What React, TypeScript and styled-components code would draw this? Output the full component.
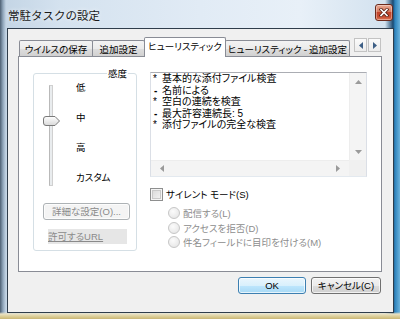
import React from "react";
import styled, { createGlobalStyle } from "styled-components";

const Global = createGlobalStyle`
  html, body { margin: 0; padding: 0; background: #fff; }
  body { width: 400px; height: 319px; overflow: hidden; }
  *, *::before, *::after { box-sizing: border-box; }
`;

const UI_FONT = `"Liberation Sans", "Noto Sans CJK JP", sans-serif`;

const Window = styled.div`
  width: 400px;
  height: 319px;
  display: flex;
  flex-direction: column;
  padding: 0 6px 6px 7px;
  font-family: ${UI_FONT};
  font-feature-settings: "palt";
  background:
    linear-gradient(to bottom, rgba(255,255,255,0) 0px, rgba(255,255,255,0) 312px, #e9e2c4 314px, #d8c98e 317px, #c8b676 319px),
    linear-gradient(to right, #4d6073 0px, #90a6bb 3px, #c4d5e5 6px, #d4e2ef 60px, #e1ebf5 200px, #e8f0f8 300px, #d3e2ef 385px, #1b4a72 393px, #2f84bd 395px, #6cb3dc 400px);
`;

const TitleBar = styled.div`
  height: 28px;
  display: flex;
  align-items: center;
  justify-content: space-between;
  padding: 0 1px 0 1px;
`;

const Title = styled.div`
  font-family: "Noto Sans CJK JP", sans-serif;
  font-feature-settings: normal;
  font-size: 11.5px;
  color: #1a1a1a;
  line-height: 14px;
  margin-top: 1px;
  text-shadow: 0 0 4px rgba(255,255,255,0.9);
`;

const CloseButton = styled.div`
  width: 18px;
  height: 17px;
  margin-top: -4px;
  border: 1px solid #6b2a1c;
  border-radius: 3px;
  display: flex;
  align-items: center;
  justify-content: center;
  background: linear-gradient(to bottom, #e8a993 0%, #d77a5f 45%, #c2432a 50%, #c84f33 80%, #e07b5a 100%);
  box-shadow: inset 0 0 0 1px rgba(255,255,255,0.35);
`;

const Client = styled.div`
  flex: 1;
  display: flex;
  flex-direction: column;
  background: #f0f0f0;
  border: 1px solid #2f3d4b;
  padding: 8px 11px 0 10px;
`;

const TabStrip = styled.div`
  height: 20px;
  display: flex;
  align-items: flex-end;
  padding-left: 2px;
  margin-bottom: -1px;
  position: relative;
  z-index: 1;
`;

const Tab = styled.div<{ $w: number; $active?: boolean }>`
  width: ${(p) => p.$w}px;
  height: ${(p) => (p.$active ? 20 : 16)}px;
  margin-bottom: ${(p) => (p.$active ? 0 : 1)}px;
  margin-left: -1px;
  border: 1px solid #898c95;
  border-bottom: none;
  border-radius: 2px 2px 0 0;
  position: relative;
  z-index: ${(p) => (p.$active ? 2 : 1)};
  display: flex;
  align-items: ${(p) => (p.$active ? "flex-start" : "center")};
  justify-content: center;
  padding-top: ${(p) => (p.$active ? 2 : 0)}px;
  font-family: "Noto Sans CJK JP", sans-serif;
  font-size: 9.5px;
  line-height: 12px;
  color: #000;
  white-space: nowrap;
  background: ${(p) =>
    p.$active
      ? "#ffffff"
      : "linear-gradient(to bottom, #f3f3f3 0%, #ebebeb 50%, #dedede 51%, #d1d1d1 100%)"};
`;

const ArrowPair = styled.div`
  display: flex;
  align-self: flex-start;
  margin: 1px 0 0 3px;
`;

const ArrowButton = styled.div`
  width: 13px;
  height: 14px;
  margin-left: 1px;
  border: 1px solid #c3c3c3;
  background: linear-gradient(to bottom, #fbfbfb, #ececec);
  display: flex;
  align-items: center;
  justify-content: center;
`;

const Panel = styled.div`
  height: 216px;
  background: #fff;
  border: 1px solid #898c95;
  display: grid;
  grid-template-columns: 104px 217px;
  column-gap: 13px;
  align-items: start;
  padding: 15px 0 0 14px;
`;

const GroupBox = styled.div`
  height: 178px;
  margin-top: 1px;
  border: 1px solid #d5dfe5;
  border-radius: 3px;
  position: relative;
  padding: 11px 0 0 9px;
  display: flex;
  flex-direction: column;
  align-items: flex-start;
`;

const GroupLabel = styled.span`
  position: absolute;
  top: -7px;
  right: 8px;
  padding: 0 1px;
  background: #fff;
  font-family: "Noto Sans CJK JP", sans-serif;
  font-size: 9.5px;
  line-height: 12px;
  color: #000;
`;

const SliderRow = styled.div`
  display: flex;
  height: 101px;
`;

const TrackColumn = styled.div`
  width: 17px;
  position: relative;
  display: flex;
  justify-content: center;
`;

const Track = styled.div`
  width: 4px;
  height: 100%;
  margin-left: -1px;
  border: 1px solid #d0d0d0;
  border-left-color: #b9b9b9;
  background: #e9ecee;
`;

const Thumb = styled.svg`
  position: absolute;
  left: 0;
  top: 31px;
`;

const LevelList = styled.div`
  display: flex;
  flex-direction: column;
  gap: 18px;
  margin: -4px 0 0 16px;
`;

const Level = styled.div`
  font-family: "Noto Sans CJK JP", sans-serif;
  font-size: 9.5px;
  line-height: 12px;
  color: #000;
`;

const PushButton = styled.div<{ $w: number; $default?: boolean; $disabled?: boolean }>`
  width: ${(p) => p.$w}px;
  height: 17px;
  border: 1px solid ${(p) => (p.$default ? "#3c7fb1" : p.$disabled ? "#adb2b5" : "#707070")};
  border-radius: 3px;
  display: flex;
  align-items: center;
  justify-content: center;
  font-family: ${UI_FONT};
  font-size: 9.5px;
  line-height: 12px;
  color: ${(p) => (p.$disabled ? "#8a8a8a" : "#000")};
  white-space: nowrap;
  background: ${(p) =>
    p.$default
      ? "linear-gradient(to bottom, #eaf6fd 0%, #d9f0fc 50%, #bee6fd 51%, #a7d9f5 100%)"
      : p.$disabled
      ? "#f4f4f4"
      : "linear-gradient(to bottom, #f2f2f2 0%, #ebebeb 50%, #dddddd 51%, #cfcfcf 100%)"};
  box-shadow: inset 0 0 0 1px rgba(255,255,255,0.7);
`;

const DetailSpacer = styled.div`
  margin-top: 17px;
`;

const UrlLink = styled.div`
  margin: 9px 0 0 5px;
  width: 79px;
  height: 15px;
  background: #e6e6e6;
  font-family: ${UI_FONT};
  font-size: 9.5px;
  line-height: 15px;
  color: #8a8a8a;
  text-decoration: underline;
`;

const RightColumn = styled.div`
  display: flex;
  flex-direction: column;
`;

const ListBox = styled.div`
  width: 217px;
  height: 105px;
  border: 1px solid #abadb3;
  border-left-color: #dbdfe6;
  border-right-color: #dbdfe6;
  border-bottom-color: #e3e9ef;
  display: grid;
  grid-template-columns: 1fr 17px;
  grid-template-rows: 1fr 16px;
`;

const ListText = styled.div`
  padding: 0 0 0 1px;
  font-family: ${UI_FONT};
  font-size: 10px;
  line-height: 11.5px;
  color: #000;
`;

const Line = styled.div`
  display: flex;
  white-space: nowrap;
`;

const Mark = styled.span<{ $dash?: boolean }>`
  width: 10px;
  flex: none;
  padding-left: ${(p) => (p.$dash ? 2 : 1)}px;
  font-weight: ${(p) => (p.$dash ? 700 : 400)};
`;

const VScroll = styled.div`
  background: #f4f4f4;
  border-left: 1px solid #ededed;
  display: flex;
  flex-direction: column;
  justify-content: space-between;
  align-items: center;
  padding: 7px 0 6px;
`;

const HScroll = styled.div`
  background: #f4f4f4;
  border-top: 1px solid #ededed;
  display: flex;
  justify-content: space-between;
  align-items: center;
  padding: 0 9px 0 9px;
`;

const Corner = styled.div`
  background: #f0f0f0;
`;

const CheckRow = styled.label`
  display: flex;
  align-items: center;
  margin-top: 10px;
  height: 14px;
  font-family: ${UI_FONT};
  font-size: 9.5px;
  color: #000;
  white-space: nowrap;
`;

const CheckBox = styled.span`
  width: 13px;
  height: 13px;
  margin-right: 3px;
  border: 1px solid #8e8f8f;
  background: linear-gradient(135deg, #d6d6d6, #f6f6f6);
  box-shadow: inset 0 0 0 1px #f4f4f4, inset 0 0 0 2px #c9c9c9;
`;

const RadioList = styled.div`
  display: flex;
  flex-direction: column;
  gap: 2px;
  margin: 6px 0 0 18px;
`;

const RadioRow = styled.div`
  display: flex;
  align-items: center;
  height: 12.5px;
  font-family: ${UI_FONT};
  font-size: 9.5px;
  color: #8d8d8d;
  white-space: nowrap;
`;

const RadioDot = styled.span`
  width: 12px;
  height: 12px;
  margin-right: 3px;
  border-radius: 50%;
  border: 1px solid #c6c6c6;
  background: radial-gradient(circle at 40% 35%, #fbfbfb, #e2e2e2);
`;

const ButtonRow = styled.div`
  display: flex;
  justify-content: flex-end;
  gap: 5px;
  margin: 5px 1px 0 0;
`;

const Tri = ({ dir, color = "#9a9a9a" }: { dir: "up" | "down" | "left" | "right"; color?: string }) => {
  const pts = {
    up: "0,4 3.5,0 7,4",
    down: "0,0 3.5,4 7,0",
    left: "4,0 0,3.5 4,7",
    right: "0,0 4,3.5 0,7",
  }[dir];
  const vert = dir === "up" || dir === "down";
  return (
    <svg width={vert ? 7 : 4} height={vert ? 4 : 7} viewBox={vert ? "0 0 7 4" : "0 0 4 7"}>
      <polygon points={pts} fill={color} />
    </svg>
  );
};

export default function App() {
  return (
    <>
      <Global />
      <Window>
        <TitleBar>
          <Title>常駐タスクの設定</Title>
          <CloseButton>
            <svg width="10" height="9" viewBox="0 0 10 9">
              <path d="M2 1.5 L8 7.5 M8 1.5 L2 7.5" stroke="#5a2216" strokeWidth="3.2" strokeLinecap="square" />
              <path d="M2 1.5 L8 7.5 M8 1.5 L2 7.5" stroke="#ffffff" strokeWidth="1.6" strokeLinecap="square" />
            </svg>
          </CloseButton>
        </TitleBar>
        <Client>
          <TabStrip>
            <Tab $w={74}>ウイルスの保存</Tab>
            <Tab $w={53}>追加設定</Tab>
            <Tab $w={82} $active>ヒューリスティック</Tab>
            <Tab $w={125}>ヒューリスティック - 追加設定</Tab>
            <ArrowPair>
              <ArrowButton>
                <Tri dir="left" color="#3d5f86" />
              </ArrowButton>
              <ArrowButton>
                <Tri dir="right" color="#3d5f86" />
              </ArrowButton>
            </ArrowPair>
          </TabStrip>
          <Panel>
            <GroupBox>
              <GroupLabel>感度</GroupLabel>
              <SliderRow>
                <TrackColumn>
                  <Track />
                  <Thumb width="18" height="10" viewBox="0 0 18 10">
                    <defs>
                      <linearGradient id="thumbG" x1="0" y1="0" x2="0" y2="1">
                        <stop offset="0" stopColor="#ffffff" />
                        <stop offset="1" stopColor="#d9d9d9" />
                      </linearGradient>
                    </defs>
                    <path
                      d="M3 0.5 H12 L16.5 5 L12 9.5 H3 Q0.5 9.5 0.5 7 V3 Q0.5 0.5 3 0.5 Z"
                      fill="url(#thumbG)"
                      stroke="#7a7a7a"
                    />
                  </Thumb>
                </TrackColumn>
                <LevelList>
                  <Level>低</Level>
                  <Level>中</Level>
                  <Level>高</Level>
                  <Level>カスタム</Level>
                </LevelList>
              </SliderRow>
              <DetailSpacer>
                <PushButton $w={87} $disabled>
                  詳細な設定(O)...
                </PushButton>
              </DetailSpacer>
              <UrlLink>許可するURL</UrlLink>
            </GroupBox>
            <RightColumn>
              <ListBox>
                <ListText>
                  <Line><Mark>*</Mark>基本的な添付ファイル検査</Line>
                  <Line><Mark $dash>-</Mark>名前による</Line>
                  <Line><Mark>*</Mark>空白の連続を検査</Line>
                  <Line><Mark $dash>-</Mark>最大許容連続長: 5</Line>
                  <Line><Mark>*</Mark>添付ファイルの完全な検査</Line>
                </ListText>
                <VScroll>
                  <Tri dir="up" />
                  <Tri dir="down" />
                </VScroll>
                <HScroll>
                  <Tri dir="left" />
                  <Tri dir="right" />
                </HScroll>
                <Corner />
              </ListBox>
              <CheckRow>
                <CheckBox />
                サイレント モード(S)
              </CheckRow>
              <RadioList>
                <RadioRow><RadioDot />配信する(L)</RadioRow>
                <RadioRow><RadioDot />アクセスを拒否(D)</RadioRow>
                <RadioRow><RadioDot />件名フィールドに目印を付ける(M)</RadioRow>
              </RadioList>
            </RightColumn>
          </Panel>
          <ButtonRow>
            <PushButton $w={68} $default>OK</PushButton>
            <PushButton $w={70}>キャンセル(C)</PushButton>
          </ButtonRow>
        </Client>
      </Window>
    </>
  );
}
